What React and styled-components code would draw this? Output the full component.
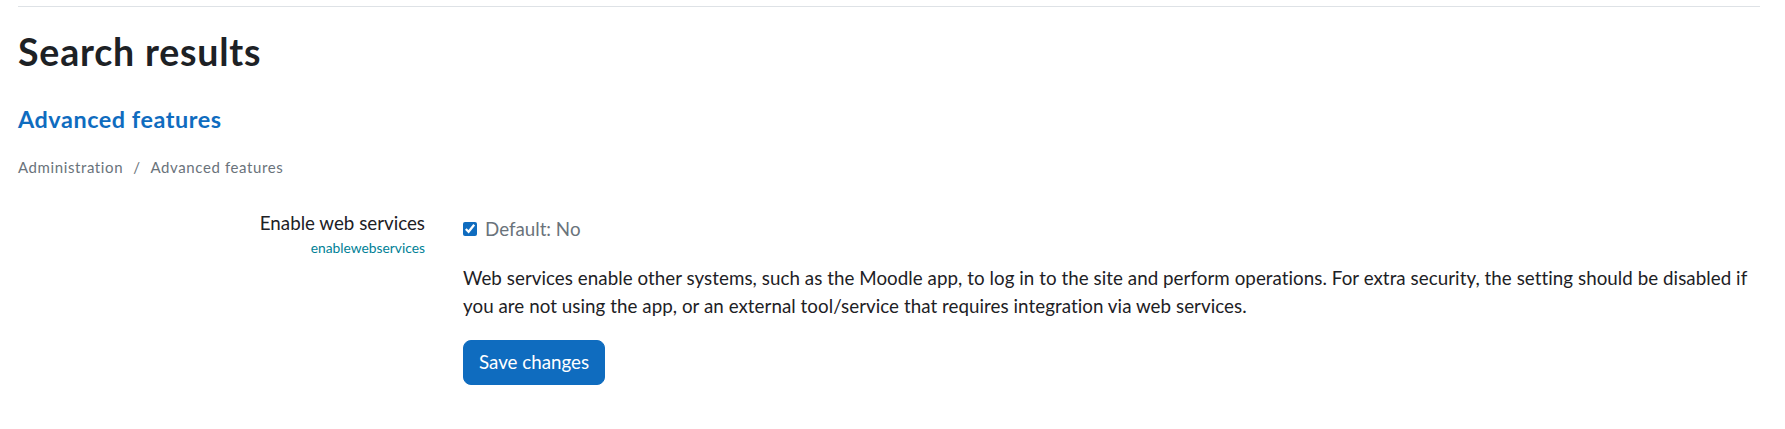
import React from 'react';
import styled, { createGlobalStyle } from 'styled-components';

const GlobalStyle = createGlobalStyle`
  html, body {
    margin: 0;
    padding: 0;
    background: #ffffff;
  }
  body {
    font-family: Lato, "Open Sans", "Liberation Sans", sans-serif;
    color: #1d2125;
    font-size: 18.75px;
    line-height: 1.5;
  }
`;

const Page = styled.div`
  padding: 6px 25px 0 18px;
`;

const Rule = styled.hr`
  margin: 0;
  height: 0;
  border: 0;
  border-top: 1px solid #dee2e6;
`;

const Title = styled.h2`
  margin: 22px 0 0;
  font-size: 37.5px;
  font-weight: 700;
  line-height: 1.2;
  letter-spacing: 0.8px;
  color: #1d2125;
`;

const SectionHeading = styled.h3`
  margin: 30.5px 0 0;
  font-size: 23.4px;
  font-weight: 700;
  line-height: 1.2;
  letter-spacing: 0.55px;
`;

const SectionLink = styled.a`
  color: #0f6cbf;
  text-decoration: none;
`;

const Breadcrumb = styled.ol`
  display: flex;
  margin: 23px 0 0;
  padding: 0;
  list-style: none;
  font-size: 15px;
  line-height: 22.5px;
  letter-spacing: 0.6px;
  color: #6a737b;
`;

const Crumb = styled.li`
  display: flex;
  & + &::before {
    content: "/";
    padding: 0 10px;
    color: #6a737b;
  }
`;

const SettingRow = styled.div`
  display: grid;
  grid-template-columns: 407px 1fr;
  column-gap: 38px;
  margin-top: 31px;
`;

const LabelCol = styled.div`
  display: flex;
  flex-direction: column;
  align-items: flex-end;
  text-align: right;
`;

const LabelText = styled.label`
  font-size: 18.75px;
  line-height: 1.5;
  color: #1d2125;
`;

const ShortName = styled.span`
  font-size: 13.8px;
  line-height: 22.5px;
  color: #008196;
`;

const SettingCol = styled.div`
  display: flex;
  flex-direction: column;
  align-items: flex-start;
  padding-top: 6px;
`;

const CheckLine = styled.div`
  display: flex;
  align-items: center;
  gap: 8px;
  line-height: 1.5;
`;

const Check = styled.input`
  width: 14px;
  height: 14px;
  margin: 0;
  accent-color: #0f6cbf;
`;

const DefaultInfo = styled.span`
  color: #6a737b;
`;

const Description = styled.p`
  margin: 21px 0 0;
  line-height: 1.5;
  letter-spacing: 0.05px;
  color: #1d2125;
`;

const SaveButton = styled.button`
  margin-top: 20px;
  padding: 7px 15px;
  border: 1px solid #0f6cbf;
  border-radius: 8px;
  background: #0f6cbf;
  color: #ffffff;
  font-family: inherit;
  font-size: 18.75px;
  line-height: 1.5;
  cursor: pointer;
`;

export default function App() {
  return (
    <>
      <GlobalStyle />
      <Page>
        <Rule />
        <Title>Search results</Title>
        <SectionHeading>
          <SectionLink href="#">Advanced features</SectionLink>
        </SectionHeading>
        <Breadcrumb>
          <Crumb>Administration</Crumb>
          <Crumb>Advanced features</Crumb>
        </Breadcrumb>
        <SettingRow>
          <LabelCol>
            <LabelText htmlFor="enablewebservices">Enable web services</LabelText>
            <ShortName>enablewebservices</ShortName>
          </LabelCol>
          <SettingCol>
            <CheckLine>
              <Check id="enablewebservices" type="checkbox" defaultChecked />
              <DefaultInfo>Default: No</DefaultInfo>
            </CheckLine>
            <Description>
              Web services enable other systems, such as the Moodle app, to log in to the site and perform operations. For extra security, the setting should be disabled if you are not using the app, or an external tool/service that requires integration via web services.
            </Description>
            <SaveButton type="button">Save changes</SaveButton>
          </SettingCol>
        </SettingRow>
      </Page>
    </>
  );
}
